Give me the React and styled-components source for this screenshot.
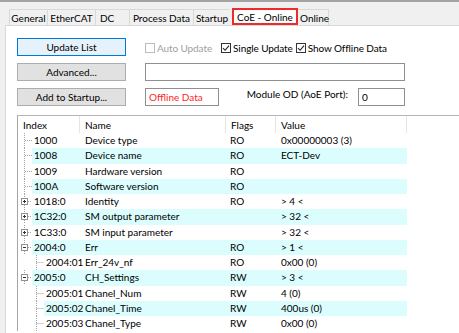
import React from 'react';
import styled, { createGlobalStyle } from 'styled-components';

const GlobalStyle = createGlobalStyle`
  body {
    margin: 0;
    background: #f0f0f0;
  }
  * {
    box-sizing: border-box;
  }
`;

const Window = styled.div`
  width: 459px;
  height: 333px;
  overflow: hidden;
  display: flex;
  flex-direction: column;
  background: #f0f0f0;
  border-top: 2px solid #a3a3a3;
  font-family: Lato, "Noto Sans", sans-serif;
  font-size: 10px;
  color: #000;
`;

const TabBar = styled.div`
  display: flex;
  align-items: flex-end;
  height: 23px;
  padding-left: 9px;
  flex-shrink: 0;
`;

const Tab = styled.div`
  width: ${p => p.$w}px;
  height: 16px;
  flex-shrink: 0;
  display: flex;
  align-items: center;
  justify-content: ${p => (p.$left ? 'flex-start' : 'center')};
  padding-left: ${p => p.$pl ?? 0}px;
  border-left: ${p => (p.$noLeft ? 'none' : '1px solid #d9d9d9')};
  border-top: 1px solid #d9d9d9;
  border-right: ${p => (p.$last ? '1px solid #d9d9d9' : 'none')};
  background: #f0f0f0;
  white-space: nowrap;
`;

const ActiveTab = styled.div`
  width: 66px;
  height: 17px;
  margin-left: 2px;
  flex-shrink: 0;
  display: flex;
  align-items: center;
  justify-content: center;
  background: #fff;
  border: 2px solid #ee2a2a;
  white-space: nowrap;
`;

const Panel = styled.div`
  flex: 1;
  margin-left: 5px;
  background: #fff;
  border-left: 1px solid #d9d9d9;
  border-top: 1px solid #d9d9d9;
  padding: 12px 0 0 11px;
`;

const Controls = styled.div`
  display: grid;
  grid-template-columns: 109px 260px;
  grid-template-rows: repeat(3, 18px);
  column-gap: 19px;
  row-gap: 7px;
`;

const Button = styled.div`
  display: flex;
  align-items: center;
  justify-content: center;
  border: 1px solid ${p => (p.$focus ? '#0078d7' : '#adadad')};
  background: ${p => (p.$focus ? '#e5f1fb' : '#e1e1e1')};
  white-space: nowrap;
`;

const CheckRow = styled.div`
  display: flex;
  align-items: center;
  padding-top: 2px;
  letter-spacing: -0.1px;
`;

const CheckItem = styled.label`
  display: flex;
  align-items: center;
  gap: 2px;
  flex-shrink: 0;
  margin-right: ${p => p.$mr ?? 0}px;
  color: ${p => (p.$disabled ? '#a0a0a0' : '#000')};
  white-space: nowrap;
`;

const Box = styled.span`
  width: 10px;
  height: 10px;
  flex-shrink: 0;
  display: flex;
  border: 1px solid ${p => (p.$disabled ? '#bcbcbc' : '#333')};
  background: #fff;
`;

const TextField = styled.div`
  height: 18px;
  border: 1px solid #8f8f8f;
  background: #fff;
  padding: 1px 3px 0;
  line-height: 14px;
  color: ${p => (p.$red ? '#ff1e1e' : '#000')};
  width: ${p => (p.$w ? `${p.$w}px` : 'auto')};
  flex-shrink: 0;
  white-space: nowrap;
`;

const OdRow = styled.div`
  display: flex;
  align-items: flex-start;
`;

const OdLabel = styled.div`
  width: 129px;
  text-align: right;
  line-height: 13px;
  margin-right: 10px;
  white-space: nowrap;
`;

const Table = styled.div`
  margin-top: 9px;
  width: 460px;
  border-left: 1px solid #a5a5a5;
  border-top: 1px solid #b4b4b4;
  background: #fff;
`;

const cols = '62px 146px 50px 131px';

const HeaderRow = styled.div`
  display: grid;
  grid-template-columns: ${cols} 1fr;
  height: 17px;
`;

const HeaderCell = styled.div`
  display: flex;
  align-items: center;
  padding-left: 5px;
  border-right: ${p => (p.$end ? 'none' : '1px solid #e5e5e5')};
`;

const Row = styled.div`
  display: grid;
  grid-template-columns: ${cols};
  width: 389px;
  height: 15.25px;
  line-height: 15.25px;
  background: ${p =>
    p.$hl
      ? `linear-gradient(to right, transparent ${p.$from}px, #dbfdfd ${p.$from}px)`
      : 'transparent'};
  white-space: nowrap;
`;

const IndexCell = styled.div`
  display: flex;
  align-items: flex-start;
`;

const Glyph = styled.svg`
  flex-shrink: 0;
  display: block;
`;

const IndexText = styled.span`
  padding-left: 2px;
`;

const Cell = styled.div`
  padding-left: ${p => p.$pad ?? 5}px;
  overflow: hidden;
`;

const rows = [
  { index: '1000', name: 'Device type', flags: 'RO', value: '0x00000003 (3)', kind: 'leaf' },
  { index: '1008', name: 'Device name', flags: 'RO', value: 'ECT-Dev', kind: 'leaf' },
  { index: '1009', name: 'Hardware version', flags: 'RO', value: '', kind: 'leaf' },
  { index: '100A', name: 'Software version', flags: 'RO', value: '', kind: 'leaf' },
  { index: '1018:0', name: 'Identity', flags: 'RO', value: '> 4 <', kind: 'plus' },
  { index: '1C32:0', name: 'SM output parameter', flags: '', value: '> 32 <', kind: 'plus' },
  { index: '1C33:0', name: 'SM input parameter', flags: '', value: '> 32 <', kind: 'plus' },
  { index: '2004:0', name: 'Err', flags: 'RO', value: '> 1 <', kind: 'minus' },
  { index: '2004:01', name: 'Err_24v_nf', flags: 'RO', value: '0x00 (0)', kind: 'leaf', depth: 1 },
  { index: '2005:0', name: 'CH_Settings', flags: 'RW', value: '> 3 <', kind: 'minus' },
  { index: '2005:01', name: 'Chanel_Num', flags: 'RW', value: '4 (0)', kind: 'leaf', depth: 1 },
  { index: '2005:02', name: 'Chanel_Time', flags: 'RW', value: '400us (0)', kind: 'leaf', depth: 1 },
  { index: '2005:03', name: 'Chanel_Type', flags: 'RW', value: '0x00 (0)', kind: 'leaf', depth: 1 },
];

const line = '#a3a3a3';

const TreeGlyph = ({ depth, kind }) => {
  if (depth) {
    return (
      <Glyph width="26" height="15" viewBox="0 0 26 15">
        <path d="M18.5 0V15M18.5 7.5H26" stroke={line} strokeDasharray="1 1" fill="none" />
      </Glyph>
    );
  }
  if (kind === 'leaf') {
    return (
      <Glyph width="14" height="15" viewBox="0 0 14 15">
        <path d="M6.5 0V15M7 7.5H14" stroke={line} strokeDasharray="1 1" fill="none" />
      </Glyph>
    );
  }
  return (
    <Glyph width="14" height="15" viewBox="0 0 14 15">
      <path d="M6.5 0V4M6.5 11V15M10 7.5H14" stroke={line} strokeDasharray="1 1" fill="none" />
      <rect x="3.5" y="4.5" width="6" height="6" fill="#fff" stroke="#919191" />
      <path d="M5 7.5H8" stroke="#333" />
      {kind === 'plus' && <path d="M6.5 6V9" stroke="#333" />}
    </Glyph>
  );
};

const Check = () => (
  <svg width="8" height="8" viewBox="0 0 8 8">
    <path d="M1 4.2L3.1 6.3L7 1.6" stroke="#222" strokeWidth="1.1" fill="none" />
  </svg>
);

const CheckBox = ({ label, checked, disabled, mr }) => (
  <CheckItem $mr={mr} $disabled={disabled}>
    <Box $disabled={disabled}>{checked && <Check />}</Box>
    {label}
  </CheckItem>
);

const tabs = [
  { label: 'General', w: 38 },
  { label: 'EtherCAT', w: 48 },
  { label: 'DC', w: 34, left: true, pl: 4 },
  { label: 'Process Data', w: 64 },
  { label: 'Startup', w: 37 },
];

const App = () => {
  return (
    <Window>
      <GlobalStyle />
      <TabBar>
        {tabs.map(t => (
          <Tab key={t.label} $w={t.w} $left={t.left} $pl={t.pl}>{t.label}</Tab>
        ))}
        <ActiveTab>CoE - Online</ActiveTab>
        <Tab $w={31} $last $left $noLeft $pl={2}>Online</Tab>
      </TabBar>
      <Panel>
        <Controls>
          <Button $focus>Update List</Button>
          <CheckRow>
            <CheckBox label="Auto Update" disabled mr={9} />
            <CheckBox label="Single Update" checked mr={3} />
            <CheckBox label="Show Offline Data" checked />
          </CheckRow>
          <Button>Advanced...</Button>
          <TextField />
          <Button>Add to Startup...</Button>
          <OdRow>
            <TextField $red $w={74}>Offline Data</TextField>
            <OdLabel>Module OD (AoE Port):</OdLabel>
            <TextField $w={47}>0</TextField>
          </OdRow>
        </Controls>
        <Table>
          <HeaderRow>
            <HeaderCell>Index</HeaderCell>
            <HeaderCell>Name</HeaderCell>
            <HeaderCell>Flags</HeaderCell>
            <HeaderCell>Value</HeaderCell>
            <HeaderCell $end />
          </HeaderRow>
          {rows.map((r, i) => (
            <Row key={r.index} $hl={i % 2 === 1} $from={r.depth ? 26 : 14}>
              <IndexCell>
                <TreeGlyph depth={r.depth} kind={r.kind} />
                <IndexText>{r.index}</IndexText>
              </IndexCell>
              <Cell>{r.name}</Cell>
              <Cell $pad={4}>{r.flags}</Cell>
              <Cell>{r.value}</Cell>
            </Row>
          ))}
        </Table>
      </Panel>
    </Window>
  );
};

export default App;
